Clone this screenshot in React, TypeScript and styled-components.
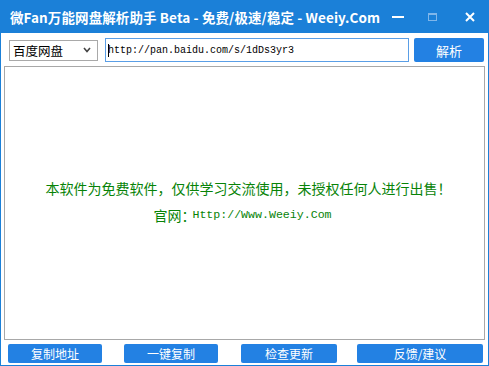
import React from "react";
import styled, { createGlobalStyle } from "styled-components";

const Global = createGlobalStyle`
  html, body { margin: 0; padding: 0; background: #fff; }
  * { box-sizing: border-box; }
`;

const BLUE = "#1b80d8";
const CJK = `"Noto Sans CJK SC", "Noto Sans", sans-serif`;
const MONO = `"Liberation Mono", "DejaVu Sans Mono", monospace`;

const Window = styled.div`
  width: 489px;
  height: 366px;
  display: flex;
  flex-direction: column;
  border: 1px solid ${BLUE};
  border-top: none;
  background: #fff;
  font-family: ${CJK};
`;

const TitleBar = styled.div`
  height: 33px;
  margin: 0 -1px;
  background: ${BLUE};
  display: flex;
  align-items: center;
  padding-left: 10px;
  color: #fff;
`;

const Title = styled.div`
  flex: 1;
  font-size: 13.5px;
  font-weight: 700;
  white-space: nowrap;
  letter-spacing: 0.1px;
`;

const Controls = styled.div`
  display: flex;
  align-items: center;
  height: 100%;
`;

const Ctl = styled.div<{ $w: number }>`
  width: ${(p) => p.$w}px;
  height: 100%;
  display: flex;
  align-items: center;
  justify-content: center;
`;

const Toolbar = styled.div`
  display: flex;
  align-items: center;
  height: 24px;
  margin-top: 5px;
  padding: 0 4px 0 8px;
`;

const Select = styled.div`
  width: 89px;
  height: 21px;
  border: 1px solid #a9a9a9;
  display: flex;
  align-items: center;
  justify-content: space-between;
  padding: 0 6px 0 3px;
  font-size: 12.5px;
  color: #000;
`;

const UrlInput = styled.div`
  margin-left: 7px;
  width: 304px;
  height: 24px;
  border: 1px solid #5a9ee6;
  display: flex;
  align-items: center;
  padding-left: 2px;
  font-family: ${MONO};
  font-size: 10px;
  color: #000;
`;

const Caret = styled.span`
  display: inline-block;
  width: 1px;
  height: 13px;
  background: #000;
  margin-right: -1px;
`;

const Button = styled.button<{ $w: number; $size?: number }>`
  width: ${(p) => p.$w}px;
  height: 100%;
  border: none;
  border-radius: 2px;
  background: #2381e3;
  color: #fff;
  font-family: ${CJK};
  font-size: ${(p) => p.$size || 12}px;
  padding: 0;
  display: flex;
  align-items: center;
  justify-content: center;
  cursor: pointer;
`;

const ParseButton = styled(Button)`
  margin-left: auto;
`;

const Content = styled.div`
  margin: 4px 3px 0 3px;
  height: 274px;
  border: 1px solid #a8a8a8;
  display: flex;
  flex-direction: column;
  align-items: center;
  justify-content: center;
  color: #078307;
  padding-bottom: 4px;
  padding-left: 8px;
`;

const Notice = styled.div`
  font-size: 14px;
  line-height: 18px;
`;

const Site = styled.div`
  margin-top: 9px;
  padding-right: 12px;
  font-size: 14px;
  line-height: 18px;
  display: flex;
  align-items: center;
`;

const SiteUrl = styled.span`
  font-family: ${MONO};
  font-size: 11.6px;
  margin-left: -3px;
`;

const Footer = styled.div`
  display: flex;
  align-items: center;
  height: 19px;
  margin-top: 4px;
  padding-left: 7px;
`;

const Gap = styled.div<{ $w: number }>`
  width: ${(p) => p.$w}px;
`;

export default function App() {
  return (
    <>
      <Global />
      <Window>
        <TitleBar>
          <Title>微Fan万能网盘解析助手 Beta - 免费/极速/稳定 - Weeiy.Com</Title>
          <Controls>
            <Ctl $w={30}>
              <svg width="12" height="2" viewBox="0 0 12 2">
                <rect width="12" height="2" fill="#fff" />
              </svg>
            </Ctl>
            <Ctl $w={38}>
              <svg width="9" height="8" viewBox="0 0 9 8">
                <rect x="0.5" y="0.5" width="8" height="7" fill="none" stroke="#7fb6ea" />
                <rect x="0" y="0" width="9" height="2" fill="#7fb6ea" />
              </svg>
            </Ctl>
            <Ctl $w={38}>
              <svg width="10" height="10" viewBox="0 0 10 10">
                <path d="M1 1L9 9M9 1L1 9" stroke="#fff" strokeWidth="2" />
              </svg>
            </Ctl>
          </Controls>
        </TitleBar>
        <Toolbar>
          <Select>
            <span>百度网盘</span>
            <svg width="8" height="6" viewBox="0 0 8 6">
              <path d="M1 1L4 4.5L7 1" stroke="#444" strokeWidth="1.6" fill="none" />
            </svg>
          </Select>
          <UrlInput>
            <Caret />
            http://pan.baidu.com/s/1dDs3yr3
          </UrlInput>
          <ParseButton $w={70} $size={13}>解析</ParseButton>
        </Toolbar>
        <Content>
          <Notice>本软件为免费软件，仅供学习交流使用，未授权任何人进行出售！</Notice>
          <Site>
            官网：<SiteUrl>Http://Www.Weeiy.Com</SiteUrl>
          </Site>
        </Content>
        <Footer>
          <Button $w={94}>复制地址</Button>
          <Gap $w={22} />
          <Button $w={94}>一键复制</Button>
          <Gap $w={23} />
          <Button $w={96}>检查更新</Button>
          <Gap $w={20} />
          <Button $w={126}>反馈/建议</Button>
        </Footer>
      </Window>
    </>
  );
}
